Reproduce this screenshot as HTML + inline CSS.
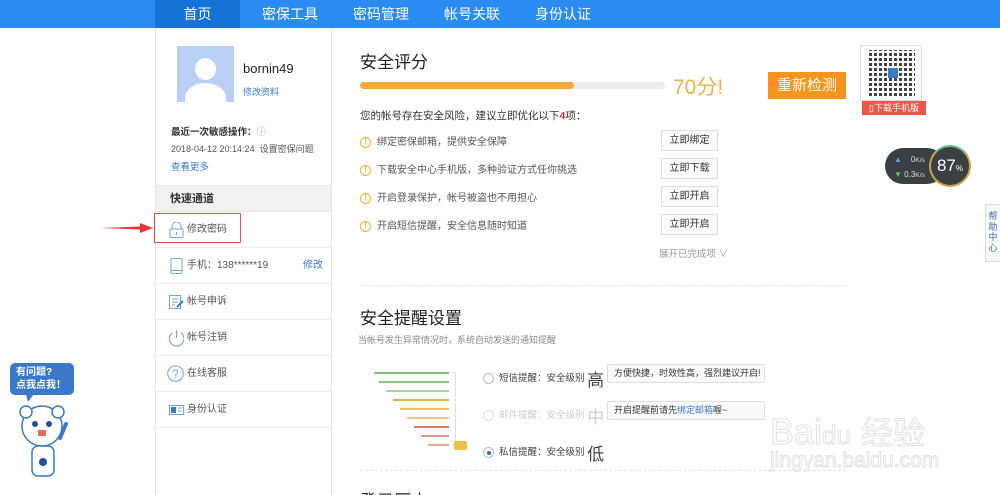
<!DOCTYPE html>
<html><head><meta charset="utf-8"><style>
*{margin:0;padding:0;box-sizing:border-box}
html,body{width:1000px;height:495px;overflow:hidden}
body{background:#fff;font-family:"Liberation Sans","Noto Sans CJK SC",sans-serif;position:relative;color:#333}
.a{position:absolute}
.nav{left:0;top:0;width:1000px;height:28px;background:#2a8cf3}
.nav span{position:absolute;top:0;height:28px;line-height:28px;color:#fff;font-size:14px;text-align:center}
.side{left:155px;top:28px;width:177px;height:467px;background:#fff;border-left:1px solid #e6e6e6;border-right:1px solid #e6e6e6}
.row{position:absolute;left:0;width:175px;height:36px;background:#fff;border-bottom:1px solid #ececec;font-size:10px;color:#555;line-height:36px;padding-left:31px}
.ico{position:absolute;left:13px;top:10px;width:15px;height:16px}
.item{position:absolute;left:360px;font-size:10px;color:#555}
.ex{display:inline-block;width:11px;height:11px;border:1.5px solid #f0b429;border-radius:50%;color:#f0b429;font-size:8px;line-height:8px;text-align:center;font-weight:bold;vertical-align:middle;margin-right:6px}
.btn{position:absolute;left:661px;width:57px;height:21px;border:1px solid #ddd;background:#fafafa;font-size:10px;text-align:center;line-height:19px;color:#333}
.ln{position:absolute;height:2px}
.rad{display:inline-block;width:11px;height:11px;border:1px solid #bbb;border-radius:50%;vertical-align:middle;margin-right:5px;background:#fff;position:relative}
.bub{position:absolute;left:607px;width:158px;height:19px;border:1px solid #ddd;border-radius:2px;background:#fafafa;font-size:9px;line-height:17px;padding-left:6px;color:#333;white-space:nowrap;overflow:hidden}
</style></head><body>
<div class="a nav">
<div class="a" style="left:155px;top:0;width:85px;height:28px;background:#1572d6"></div>
<span style="left:155px;width:85px">首页</span>
<span style="left:250px;width:80px">密保工具</span>
<span style="left:341px;width:80px">密码管理</span>
<span style="left:432px;width:80px">帐号关联</span>
<span style="left:523px;width:80px">身份认证</span>
</div>
<div class="a side">
<div class="a" style="left:21px;top:18px;width:57px;height:56px;background:#b9cff5;overflow:hidden">
<div class="a" style="left:18px;top:12px;width:21px;height:22px;border-radius:50%;background:#fff"></div>
<div class="a" style="left:8px;top:37px;width:41px;height:30px;border-radius:50% 50% 0 0;background:#fff"></div></div>
<div class="a" style="left:87px;top:33px;font-size:13px;color:#222">bornin49</div>
<div class="a" style="left:87px;top:57px;font-size:9px;color:#3a7bc8">修改资料</div>
<div class="a" style="left:15px;top:96px;font-size:9.5px;color:#333;font-weight:bold">最近一次敏感操作：<span style="color:#6aa0e0;font-weight:normal">ⓘ</span></div>
<div class="a" style="left:15px;top:114px;font-size:9px;color:#555">2018-04-12 20:14:24 &nbsp;设置密保问题</div>
<div class="a" style="left:15px;top:131px;font-size:9.5px;color:#3a7bc8">查看更多</div>
<div class="a" style="left:0;top:157px;width:175px;height:27px;background:#f1f1f1;border-top:1px solid #e8e8e8;border-bottom:1px solid #e8e8e8;font-size:11px;font-weight:bold;padding-left:14px;line-height:27px;color:#333">快速通道</div>
<div class="row" style="top:184px"><svg class="ico" viewBox="0 0 15 16"><path d="M3 7V4.5a4.5 4.5 0 0 1 9 0V7" fill="none" stroke="#7aa3cf"/><rect x="1" y="7" width="13" height="8.5" rx="1" fill="none" stroke="#7aa3cf"/><rect x="7" y="10" width="1" height="3" fill="#7aa3cf"/></svg>修改密码</div>
<div class="row" style="top:220px"><svg class="ico" viewBox="0 0 15 16"><rect x="2" y="0.5" width="11" height="15" rx="1.5" fill="none" stroke="#7aa3cf"/><line x1="2" y1="12.5" x2="13" y2="12.5" stroke="#7aa3cf"/></svg>手机：138******19<span style="position:absolute;right:8px;color:#3a7bc8">修改</span></div>
<div class="row" style="top:256px"><svg class="ico" viewBox="0 0 15 16"><rect x="0.5" y="1.5" width="11" height="13" fill="none" stroke="#7aa3cf"/><path d="M3 5h6M3 8h6M3 11h3" stroke="#7aa3cf"/><path d="M8 13l6-6" stroke="#3a7bc8" stroke-width="2"/></svg>帐号申诉</div>
<div class="row" style="top:292px"><svg class="ico" viewBox="0 0 15 16" style="left:11px;width:17px;height:18px;top:9px"><path d="M4.5 3.5a6.5 6.5 0 1 0 8 0" fill="none" stroke="#7aa3cf"/><line x1="8.5" y1="1" x2="8.5" y2="8" stroke="#7aa3cf"/></svg>帐号注销</div>
<div class="row" style="top:328px"><svg class="ico" viewBox="0 0 16 16" style="left:11px;width:17px;height:17px;top:9px"><circle cx="8" cy="8" r="7.3" fill="none" stroke="#7aa3cf"/><text x="8" y="12" font-size="11" text-anchor="middle" fill="#7aa3cf" font-family="Liberation Sans">?</text></svg>在线客服</div>
<div class="row" style="top:364px"><svg class="ico" viewBox="0 0 15 16"><rect x="0.5" y="3.5" width="14" height="9" fill="none" stroke="#7aa3cf"/><rect x="2" y="5" width="5" height="6" fill="#3a7bc8"/><path d="M9 6h4M9 9h4" stroke="#7aa3cf"/></svg>身份认证</div>
</div>
<div class="a" style="left:154px;top:213px;width:87px;height:30px;border:1px solid #d9534f"></div>
<svg class="a" style="left:100px;top:222px" width="54" height="12"><path d="M0 6 L40 4.5 L40 1 L53 6 L40 11 L40 7.5 Z" fill="#e33"/></svg>

<div class="a" style="left:360px;top:48px;font-size:17px;color:#222">安全评分</div>
<div class="a" style="left:360px;top:82px;width:305px;height:7px;border-radius:4px;background:#ececec"></div>
<div class="a" style="left:360px;top:82px;width:214px;height:7px;border-radius:4px;background:#f7a935"></div>
<div class="a" style="left:673px;top:71px;font-size:21px;color:#e7b34f">70分!</div>
<div class="a" style="left:768px;top:72px;width:78px;height:27px;background:#f7941d;color:#fff;font-size:15px;text-align:center;line-height:27px">重新检测</div>
<div class="a" style="left:860px;top:45px;width:62px;height:56px;border:1px solid #ddd;background:#fff">
<div class="a" style="left:8px;top:4px;width:46px;height:46px;background:repeating-linear-gradient(90deg,#222 0 3px,#fff 3px 5px),#fff;opacity:.85"></div>
<div class="a" style="left:8px;top:4px;width:46px;height:46px;background:repeating-linear-gradient(0deg,transparent 0 3px,#fff 3px 5px)"></div>
<div class="a" style="left:27px;top:22px;width:10px;height:10px;background:#3a7bc8"></div></div>
<div class="a" style="left:862px;top:101px;width:64px;height:14px;background:#e8574a;color:#fff;font-size:9px;line-height:14px;text-align:center">▯下载手机版</div>

<div class="a" style="left:360px;top:108px;font-size:10.5px;color:#333">您的帐号存在安全风险，建议立即优化以下<b style="color:#d33">4</b>项：</div>
<div class="item" style="top:133px"><span class="ex">!</span>绑定密保邮箱，提供安全保障</div>
<div class="item" style="top:161px"><span class="ex">!</span>下载安全中心手机版，多种验证方式任你挑选</div>
<div class="item" style="top:189px"><span class="ex">!</span>开启登录保护，帐号被盗也不用担心</div>
<div class="item" style="top:217px"><span class="ex">!</span>开启短信提醒，安全信息随时知道</div>
<div class="btn" style="top:130px">立即绑定</div>
<div class="btn" style="top:158px">立即下载</div>
<div class="btn" style="top:186px">立即开启</div>
<div class="btn" style="top:214px">立即开启</div>
<div class="a" style="left:659px;top:246px;font-size:9.5px;color:#999">展开已完成项 ∨</div>
<div class="a" style="left:360px;top:285px;width:486px;border-top:1px dashed #e2e2e2"></div>

<div class="a" style="left:360px;top:304px;font-size:17px;color:#222">安全提醒设置</div>
<div class="a" style="left:358px;top:333px;font-size:9px;color:#888">当帐号发生异常情况时，系统自动发送的通知提醒</div>
<div class="ln" style="left:374px;top:372px;width:75px;background:#7cbf70"></div>
<div class="ln" style="left:379px;top:381px;width:70px;background:#8cc77e"></div>
<div class="ln" style="left:386px;top:390px;width:63px;background:#a7d49b"></div>
<div class="ln" style="left:393px;top:399px;width:56px;background:#e7b347"></div>
<div class="ln" style="left:400px;top:408px;width:49px;background:#ecbf62"></div>
<div class="ln" style="left:407px;top:417px;width:42px;background:#efcb83"></div>
<div class="ln" style="left:414px;top:426px;width:35px;background:#d97a6e"></div>
<div class="ln" style="left:421px;top:435px;width:28px;background:#e09489"></div>
<div class="ln" style="left:428px;top:444px;width:21px;background:#e9aaa2"></div>
<div class="a" style="left:451px;top:372px;width:5px;height:74px;border:1px solid #ddd;border-left:none"></div>
<div class="a" style="left:454px;top:441px;width:13px;height:9px;background:#f0c040;border-radius:2px"></div>
<div class="a" style="left:483px;top:366px;font-size:9.5px;color:#444"><span class="rad"></span>短信提醒：安全级别 <span style="font-size:17px;vertical-align:middle">高</span></div>
<div class="a" style="left:483px;top:403px;font-size:9.5px;color:#ccc"><span class="rad" style="border-color:#ddd"></span>邮件提醒：安全级别 <span style="font-size:17px;vertical-align:middle">中</span></div>
<div class="a" style="left:483px;top:440px;font-size:9.5px;color:#444"><span class="rad"><span style="position:absolute;left:2.5px;top:2.5px;width:4px;height:4px;border-radius:50%;background:#2f6fc4"></span></span>私信提醒：安全级别 <span style="font-size:17px;vertical-align:middle">低</span></div>
<div class="bub" style="top:364px">方便快捷，时效性高，强烈建议开启!</div>
<div class="bub" style="top:401px">开启提醒前请先<span style="color:#3a7bc8">绑定邮箱</span>喔~</div>
<div class="a" style="left:360px;top:470px;width:486px;border-top:1px dashed #e2e2e2"></div>
<div class="a" style="left:360px;top:487px;font-size:17px;color:#222">登录历史</div>

<div class="a" style="left:885px;top:148px;width:60px;height:36px;border-radius:18px;background:#3a3f44"></div>
<div class="a" style="left:894px;top:153px;font-size:8px;color:#ddd;line-height:14px"><span style="color:#5aa0e0">▲</span> &nbsp;&nbsp;&nbsp;0<small>K/s</small><br><span style="color:#5c5">▼</span> 0.3<small>K/s</small></div>
<div class="a" style="left:929px;top:145px;width:42px;height:42px;border-radius:50%;background:#3a3f44;border:2px solid #c9a640;border-top-color:#5bbf8a;color:#fff;font-size:17px;text-align:center;line-height:38px">87<small style="font-size:8px">%</small></div>
<div class="a" style="left:985px;top:204px;width:16px;height:58px;border:1px solid #ddd;background:#f7f7f7;font-size:9px;color:#3a6fa8;text-align:center;line-height:10.5px;padding-top:6px">帮<br>助<br>中<br>心</div>

<div class="a" style="left:10px;top:363px;width:64px;height:32px;background:#3b78c8;border-radius:5px;color:#fff;font-size:10px;font-weight:bold;line-height:13px;padding:3px 0 0 6px">有问题?<br>点我点我！</div>
<svg class="a" style="left:14px;top:394px" width="70" height="90"><path d="M12 0 L14 8 L20 0Z" fill="#3b78c8"/><circle cx="28" cy="32" r="20" fill="#fff" stroke="#3b78c8" stroke-width="1.5"/><circle cx="12" cy="18" r="6" fill="#fff" stroke="#3b78c8" stroke-width="1.5"/><circle cx="44" cy="18" r="6" fill="#fff" stroke="#3b78c8" stroke-width="1.5"/><circle cx="21" cy="30" r="3" fill="#1f4f9a"/><circle cx="35" cy="30" r="3" fill="#1f4f9a"/><rect x="24" y="36" width="8" height="6" fill="#e8685a"/><rect x="18" y="52" width="22" height="30" rx="6" fill="#fff" stroke="#3b78c8" stroke-width="1.5"/><circle cx="29" cy="68" r="4" fill="#1f4f9a"/><path d="M46 44 L52 30" stroke="#3b78c8" stroke-width="4" stroke-linecap="round"/></svg>

<div class="a" style="left:770px;top:408px;font-size:36px;color:#fff;-webkit-text-stroke:1px #e2e2e2;white-space:nowrap">Bai<span style="font-size:26px">du</span> <span style="font-size:32px">经验</span></div>
<div class="a" style="left:770px;top:449px;font-size:21px;color:#fff;-webkit-text-stroke:1px #e2e2e2">jingyan.baidu.com</div>
</body></html>
